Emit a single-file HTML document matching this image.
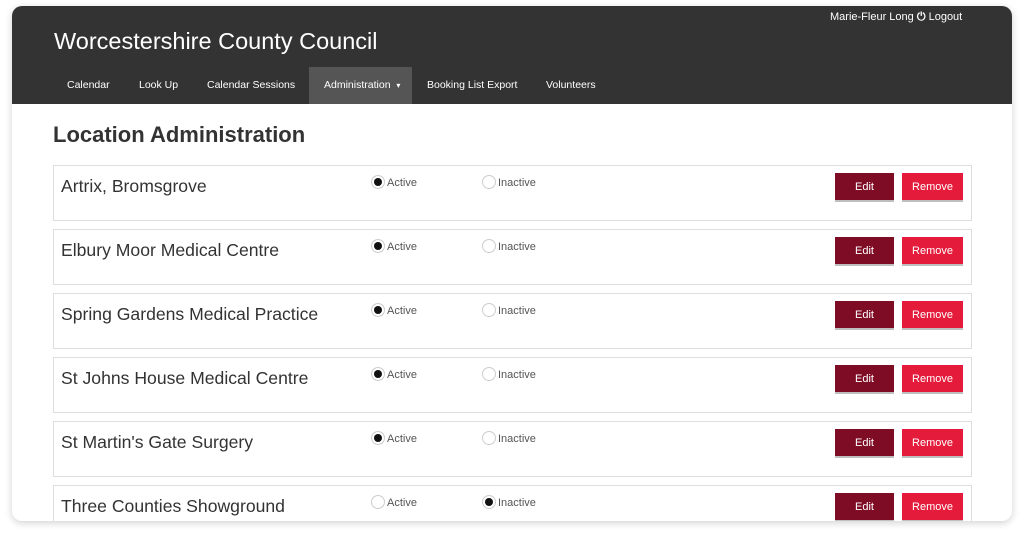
<!DOCTYPE html>
<html><head><meta charset="utf-8"><style>
*{box-sizing:border-box;margin:0;padding:0}
body{width:1024px;height:540px;background:#fff;font-family:"Liberation Sans",Arial,sans-serif;position:relative;overflow:hidden}
.card{position:absolute;left:12px;top:6px;width:1000px;height:515px;border-radius:10px;overflow:hidden;background:#fff;box-shadow:0 2px 8px rgba(0,0,0,.18)}
.hdr{position:absolute;left:0;top:0;width:1000px;height:98px;background:#333}
.brand{position:absolute;left:42px;top:22px;color:#fff;font-size:23.5px}
.user{position:absolute;left:818px;top:5px;color:#fff;font-size:11px}
.nav a{position:absolute;top:61px;height:37px;line-height:37px;color:#fff;font-size:10.5px;text-decoration:none}
.nav .act{background:#555;left:297px;width:103px;padding-left:15px}
h1{position:absolute;left:41px;top:116px;font-size:22px;font-weight:bold;color:#333}
.row{position:absolute;left:41px;width:919px;height:56px;border:1px solid #ddd;background:#fff}
.name{position:absolute;left:7px;top:10px;font-size:17.6px;color:#333}
.r{position:absolute;top:10px;font-size:11px;color:#555;padding-left:16px;line-height:14px}
.r:before{content:"";position:absolute;left:0;top:-1px;width:14px;height:14px;border-radius:50%;border:1px solid #ccc;box-sizing:border-box;background:#fff}
.r.on:after{content:"";position:absolute;left:3px;top:2px;width:8px;height:8px;border-radius:50%;background:#111}
.btn{position:absolute;top:7px;height:27px;line-height:28px;text-align:center;color:#fff;font-size:11px;box-shadow:0 2px 0 rgba(0,0,0,.25)}
.e{left:781px;width:59px;background:#7d0c24}
.x{left:848px;width:61px;background:#e41b3b}
</style></head><body>
<div class="card">
<div class="hdr">
<div class="brand">Worcestershire County Council</div>
<div class="user">Marie-Fleur Long <b>&#x23FB;</b> Logout</div>
<div class="nav">
<a style="left:55px">Calendar</a>
<a style="left:127px">Look Up</a>
<a style="left:195px">Calendar Sessions</a>
<a class="act">Administration &nbsp;<span style="font-size:8px">&#9662;</span></a>
<a style="left:415px">Booking List Export</a>
<a style="left:534px">Volunteers</a>
</div>
</div>
<h1>Location Administration</h1>
<div class="row" style="top:159px"><div class="name">Artrix, Bromsgrove</div><span class="r on" style="left:317px">Active</span><span class="r" style="left:428px">Inactive</span><div class="btn e">Edit</div><div class="btn x">Remove</div></div>
<div class="row" style="top:223px"><div class="name">Elbury Moor Medical Centre</div><span class="r on" style="left:317px">Active</span><span class="r" style="left:428px">Inactive</span><div class="btn e">Edit</div><div class="btn x">Remove</div></div>
<div class="row" style="top:287px"><div class="name">Spring Gardens Medical Practice</div><span class="r on" style="left:317px">Active</span><span class="r" style="left:428px">Inactive</span><div class="btn e">Edit</div><div class="btn x">Remove</div></div>
<div class="row" style="top:351px"><div class="name">St Johns House Medical Centre</div><span class="r on" style="left:317px">Active</span><span class="r" style="left:428px">Inactive</span><div class="btn e">Edit</div><div class="btn x">Remove</div></div>
<div class="row" style="top:415px"><div class="name">St Martin's Gate Surgery</div><span class="r on" style="left:317px">Active</span><span class="r" style="left:428px">Inactive</span><div class="btn e">Edit</div><div class="btn x">Remove</div></div>
<div class="row" style="top:479px"><div class="name">Three Counties Showground</div><span class="r" style="left:317px">Active</span><span class="r on" style="left:428px">Inactive</span><div class="btn e">Edit</div><div class="btn x">Remove</div></div>
</div>
</body></html>
